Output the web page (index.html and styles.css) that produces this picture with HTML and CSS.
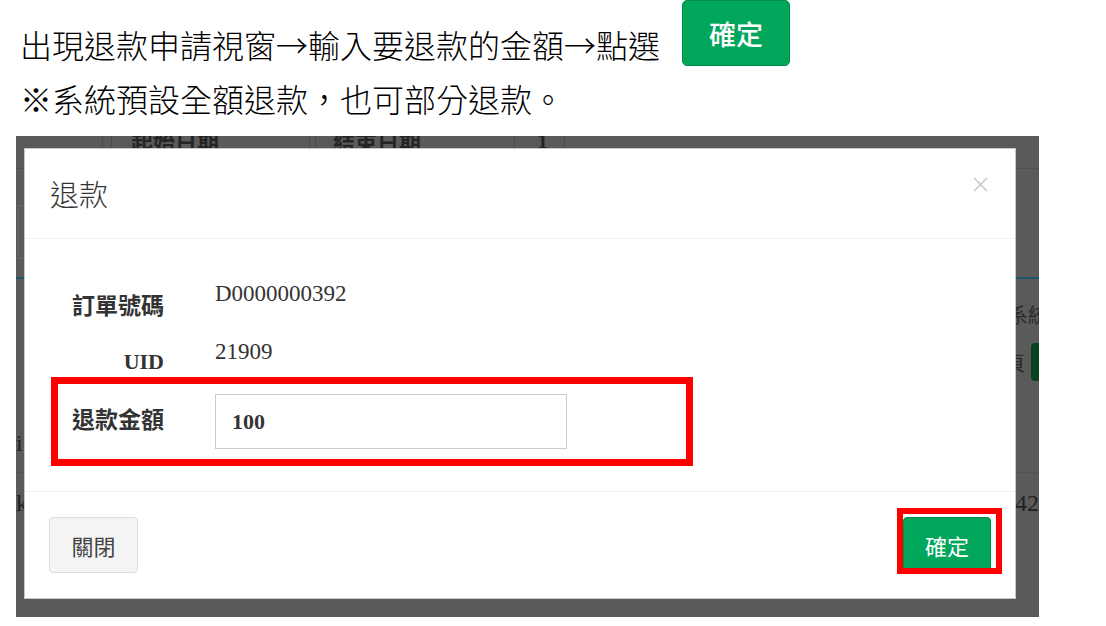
FILE: index.html
```html
<!DOCTYPE html>
<html lang="zh-Hant">
<head>
<meta charset="utf-8">
<title>退款</title>
<link rel="stylesheet" href="styles.css">
</head>
<body>
<div class="intro">
  <div class="step">
    <p class="step-text">出現退款申請視窗→輸入要退款的金額→點選</p>
    <span class="btn-demo">確定</span>
  </div>
  <p class="note">※系統預設全額退款，也可部分退款。</p>
</div>

<div class="shot">
  <div class="bgpage">
    <div class="bg-thead">
      <div class="th th1"></div>
      <div class="th th2"></div>
      <div class="th th3"><span>起始日期</span></div>
      <div class="th th4"></div>
      <div class="th th5"><span>結束日期</span></div>
      <div class="th th6"><span>1</span></div>
      <div class="th th7"></div>
    </div>
    <div class="bg-search"></div>
    <div class="bg-rule"></div>
    <div class="bg-row bg-row-sys"><span class="bg-sys">系統</span></div>
    <div class="bg-row bg-row-btn"><span class="bg-page">頁</span><span class="bg-btn"></span></div>
    <div class="bg-row bg-row-i"><span class="bg-txt">i</span></div>
    <div class="bg-line"></div>
    <div class="bg-row bg-row-last"><span class="bg-txt">k</span><span class="bg-txt">42</span></div>
  </div>

  <div class="modal">
    <div class="modal-header">
      <h4 class="modal-title">退款</h4>
      <span class="close">
        <svg width="15" height="15" viewBox="0 0 15 15"><path d="M1 1L14 14M14 1L1 14" stroke="#c9c9c9" stroke-width="1.6" fill="none"/></svg>
      </span>
    </div>
    <div class="modal-body">
      <div class="form">
        <div class="lbl lbl-cjk">訂單號碼</div>
        <div class="val">D0000000392</div>
        <div class="lbl lbl-uid">UID</div>
        <div class="val">21909</div>
        <div class="lbl lbl-cjk">退款金額</div>
        <div class="inp">100</div>
      </div>
    </div>
    <div class="modal-footer">
      <button class="btn btn-default" type="button">關閉</button>
      <button class="btn btn-success" type="button">確定</button>
    </div>
    <div class="mark mark-amount"></div>
    <div class="mark mark-confirm"></div>
  </div>
</div>
</body>
</html>
```

FILE: styles.css
```css
body {
  margin: 0;
  background: #fff;
  font-family: "Noto Sans CJK TC", sans-serif;
  color: #000;
}

.intro {
  padding-left: 20px;
  font-weight: 300;
}

.step {
  display: flex;
  align-items: flex-start;
  gap: 22px;
  height: 66px;
}

.step-text {
  margin: 22px 0 0;
  font-size: 32px;
  line-height: 44px;
  white-space: nowrap;
}

.btn-demo {
  display: flex;
  align-items: center;
  justify-content: center;
  width: 108px;
  height: 66px;
  box-sizing: border-box;
  background: #00a65a;
  border: 1px solid #008d4c;
  border-radius: 5px;
  color: #fff;
  font-size: 27px;
  font-weight: 500;
}

.note {
  margin: 10px 0 0;
  font-size: 32px;
  line-height: 44px;
  white-space: nowrap;
}

.shot {
  margin: 16px 0 0 16px;
  width: 1023px;
  height: 481px;
  position: relative;
  overflow: hidden;
  background: #5a5a5a;
}

/* dimmed page behind the dialog */
.bgpage {
  display: flex;
  flex-direction: column;
  height: 100%;
}

.bg-thead {
  display: flex;
  height: 32px;
  flex: none;
  border-bottom: 1px solid #505050;
}

.th {
  flex: none;
  border-right: 1px solid #4c4c4c;
  overflow: hidden;
  font-weight: 700;
  font-size: 22px;
  line-height: 22px;
  color: #242424;
}

.th span {
  display: block;
  margin-top: -6px;
}

.th1 { width: 86px; }
.th2 { width: 8px; }
.th3 { width: 178px; padding-left: 19px; }
.th4 { width: 5px; }
.th5 { width: 181px; padding-left: 17px; }
.th6 { width: 27px; padding-left: 22px; font-family: "Liberation Serif", serif; }
.th7 { flex: 1; border-right: none; }

.bg-search {
  margin: 36px 0 0 2px;
  width: 400px;
  height: 54px;
  flex: none;
  box-sizing: border-box;
  border: 1px solid #6a6a6a;
}

.bg-rule {
  margin-top: 18px;
  height: 2px;
  flex: none;
  background: #1b5462;
}

.bg-row {
  display: flex;
  flex: none;
}

.bg-row-sys {
  margin-top: 26px;
  justify-content: flex-end;
}

.bg-sys {
  font-size: 20px;
  line-height: 20px;
  color: #2a2a2a;
  margin-right: -9px;
}

.bg-row-btn {
  margin-top: 18px;
  height: 38px;
  justify-content: flex-end;
  align-items: center;
  gap: 6px;
}

.bg-page {
  font-size: 20px;
  color: #2a2a2a;
}

.bg-btn {
  width: 20px;
  height: 38px;
  margin-right: -12px;
  border-radius: 4px;
  background: #07431f;
}

.bg-txt {
  font-family: "Liberation Serif", serif;
  font-size: 24px;
  line-height: 26px;
  color: #222;
}

.bg-row-i {
  margin-top: 49px;
}

.bg-line {
  margin-top: 16px;
  height: 1px;
  flex: none;
  background: #535353;
}

.bg-row-last {
  margin-top: 17px;
  justify-content: space-between;
}

/* dialog */
.modal {
  position: absolute;
  left: 8px;
  top: 12px;
  width: 992px;
  box-sizing: border-box;
  background: #fff;
  border: 1px solid #c8c8c8;
  font-family: "Noto Sans CJK TC", sans-serif;
}

.modal-header {
  height: 90px;
  box-sizing: border-box;
  padding: 0 27px 0 25px;
  display: flex;
  align-items: center;
  justify-content: space-between;
  border-bottom: 1px solid #f0f0f0;
}

.modal-title {
  margin: 0;
  font-size: 29px;
  font-weight: 300;
  line-height: 1;
  color: #333;
}

.close {
  display: block;
  width: 15px;
  height: 15px;
  margin-bottom: 18px;
}

.close svg {
  display: block;
}

.modal-body {
  padding: 41px 25px 42px;
}

.form {
  display: grid;
  grid-template-columns: 114px 352px;
  grid-template-rows: 58px 56px 55px;
  column-gap: 51px;
}

.lbl {
  text-align: right;
  font-family: "Liberation Serif", "Noto Sans CJK TC", serif;
  font-weight: 700;
  font-size: 22px;
  line-height: 28px;
  padding-top: 13px;
  color: #333;
}

.lbl-cjk {
  font-size: 23px;
}

.lbl-uid {
  padding-top: 10px;
}

.val {
  font-family: "Liberation Serif", serif;
  font-size: 23px;
  line-height: 28px;
  color: #333;
}

.inp {
  box-sizing: border-box;
  height: 55px;
  border: 1px solid #ccc;
  padding: 0 16px;
  display: flex;
  align-items: center;
  font-family: "Liberation Serif", serif;
  font-weight: 700;
  font-size: 22px;
  color: #333;
}

.modal-footer {
  border-top: 1px solid #f0f0f0;
  padding: 25px 24px;
  display: flex;
  justify-content: space-between;
}

.btn {
  height: 56px;
  box-sizing: border-box;
  border-radius: 4px;
  font-family: "Noto Sans CJK TC", sans-serif;
  font-size: 22px;
  display: flex;
  align-items: center;
  justify-content: center;
  padding: 0;
  margin: 0;
}

.btn-default {
  width: 89px;
  background: #f4f4f4;
  border: 1px solid #ddd;
  color: #444;
}

.btn-success {
  width: 88px;
  background: #00a65a;
  border: 1px solid #008d4c;
  color: #fff;
}

/* red annotation frames */
.mark {
  position: absolute;
  box-sizing: border-box;
  border: 6px solid #ff0000;
  pointer-events: none;
}

.mark-amount {
  left: 26px;
  top: 228px;
  width: 642px;
  height: 89px;
  border-width: 7px;
}

.mark-confirm {
  left: 872px;
  top: 359px;
  width: 105px;
  height: 66px;
}
```
